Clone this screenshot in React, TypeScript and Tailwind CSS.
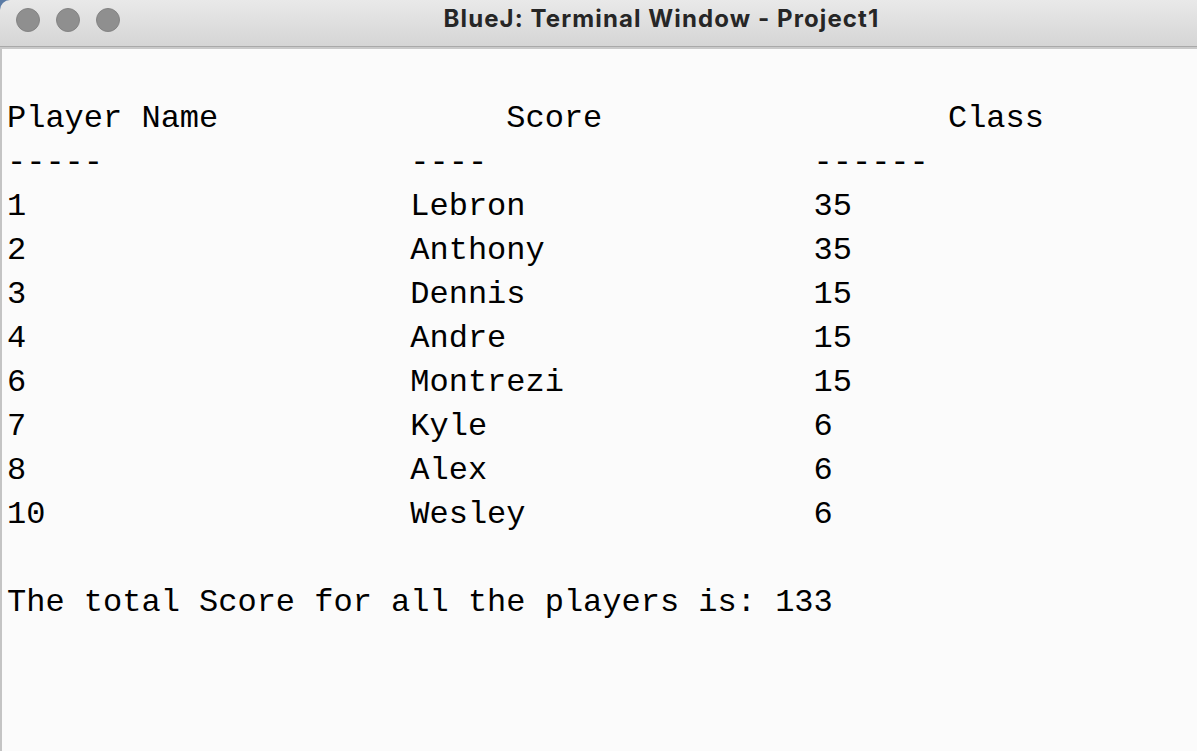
const rows: [string, string, string][] = [
  ["1", "Lebron", "35"],
  ["2", "Anthony", "35"],
  ["3", "Dennis", "15"],
  ["4", "Andre", "15"],
  ["6", "Montrezi", "15"],
  ["7", "Kyle", "6"],
  ["8", "Alex", "6"],
  ["10", "Wesley", "6"],
];

function TrafficLight() {
  return <div className="w-[24px] h-[24px] rounded-full bg-[#8f8f8f] border border-[#848484]" />;
}

function Row({ a, b, c }: { a: string; b: string; c: string }) {
  return (
    <div className="flex h-[44px] items-center whitespace-pre">
      <span className="w-[21ch] shrink-0">{a}</span>
      <span className="w-[21ch] shrink-0">{b}</span>
      <span>{c}</span>
    </div>
  );
}

export default function App() {
  return (
    <div className="w-[1197px] h-[751px] overflow-hidden bg-[#fbfbfb] flex flex-col relative">
      <div className="absolute left-0 top-0 w-[10px] h-[10px] bg-[#5b7ba5]" />
      <header className="relative h-[47px] shrink-0 rounded-tl-[10px] bg-gradient-to-b from-[#e9e9e9] to-[#d5d5d5] border-b border-[#a9a9a9] flex items-center">
        <div className="flex gap-[16px] pl-[16px] pb-[6px]">
          <TrafficLight />
          <TrafficLight />
          <TrafficLight />
        </div>
        <div className="absolute inset-0 flex items-center justify-center pl-[126px] pb-[8px]">
          <span className="font-['Inter','Liberation_Sans',Arial,sans-serif] font-bold text-[24px] tracking-[1.1px] text-[#262626]">
            BlueJ: Terminal Window - Project1
          </span>
        </div>
      </header>
      <div className="h-[2px] bg-[#c9c9c9] shrink-0" />
      <main className="flex-1 border-l-2 border-[#c4c4c4] pl-[5px] pt-[4px] font-['Liberation_Mono','DejaVu_Sans_Mono',monospace] text-[32px] text-black leading-[44px]">
        <div className="h-[44px]" />
        <div className="flex h-[44px] items-center whitespace-pre">
          <span className="w-[26ch] shrink-0">Player Name</span>
          <span className="w-[23ch] shrink-0">Score</span>
          <span>Class</span>
        </div>
        <Row a="-----" b="----" c="------" />
        {rows.map(([a, b, c]) => (
          <Row key={a} a={a} b={b} c={c} />
        ))}
        <div className="h-[44px]" />
        <div className="h-[44px] flex items-center whitespace-pre">The total Score for all the players is: 133</div>
      </main>
    </div>
  );
}
